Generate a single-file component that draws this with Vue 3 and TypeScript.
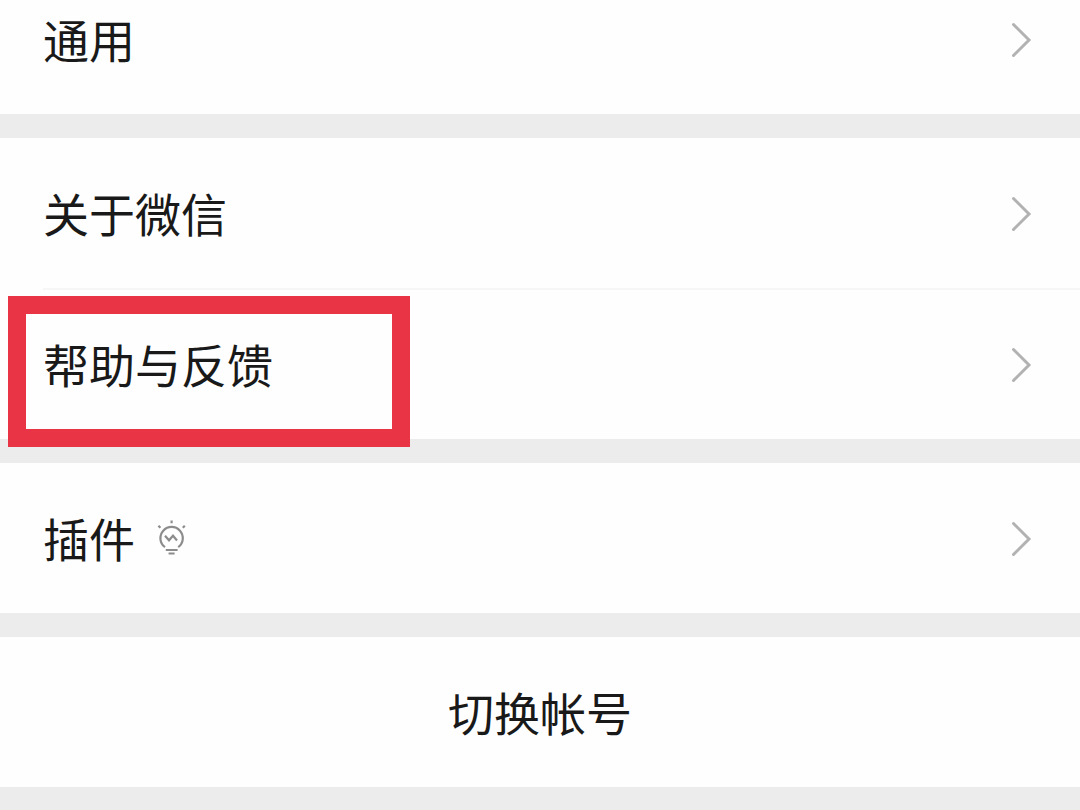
<script setup lang="ts">
interface Item {
  label: string
  hint?: boolean
  marked?: boolean
}

const groups: Item[][] = [
  [{ label: '通用' }],
  [{ label: '关于微信' }, { label: '帮助与反馈', marked: true }],
  [{ label: '插件', hint: true }],
]
</script>

<template>
  <main class="settings">
    <section v-for="(group, index) in groups" :key="index" class="group">
      <button v-for="item in group" :key="item.label" type="button" class="row">
        <span class="label">{{ item.label }}</span>
        <svg v-if="item.hint" class="bulb" viewBox="0 0 32 38" aria-hidden="true">
          <path d="M10 27.2A11.2 11.2 0 1 1 23.2 27.2" />
          <path d="M10 15.7l4 4.6 4-4.6 4 4.8" />
          <path d="M10.8 30h11.8M13.6 33.5h6M16.6 0.5v2.8M3.4 5.7l2 2M29.8 5.7l-2 2" />
        </svg>
        <svg class="chevron" viewBox="0 0 22 36" aria-hidden="true">
          <path d="M3.5 2.5L19 18L3.5 33.5" />
        </svg>
        <span v-if="item.marked" class="marker"></span>
      </button>
    </section>
    <section class="group">
      <button type="button" class="row centered">
        <span class="label">切换帐号</span>
      </button>
    </section>
  </main>
</template>

<style>
html,
body {
  background: #ececec;
}

body {
  margin: 0;
  overflow: hidden;
}
</style>

<style scoped>
.settings {
  display: flex;
  flex-direction: column;
  gap: 24px;
  margin-top: -36px;
  padding-bottom: 24px;
  font-family: "Noto Sans CJK SC", sans-serif;
}

.group {
  background: #fefefe;
}

.row {
  position: relative;
  display: flex;
  align-items: center;
  width: 100%;
  height: 150px;
  margin: 0;
  padding: 2px 48px 0 43px;
  border: 0;
  background: none;
  color: #191919;
  font-family: inherit;
  font-size: 46px;
  line-height: 68px;
  text-align: left;
  cursor: pointer;
}

.row + .row {
  height: 151px;
}

.row + .row::before {
  content: "";
  position: absolute;
  top: 0;
  left: 43px;
  right: 0;
  height: 2px;
  background: #f6f6f6;
}

.label {
  padding-bottom: 4px;
}

.centered {
  justify-content: center;
  padding: 2px 43px 0;
}

.bulb {
  width: 32px;
  height: 38px;
  margin-left: 20px;
  fill: none;
  stroke: #8c8c8c;
  stroke-width: 2.2;
}

.chevron {
  width: 22px;
  height: 36px;
  margin-left: auto;
  fill: none;
  stroke: #b2b2b2;
  stroke-width: 3;
  stroke-linecap: round;
}

.marker {
  position: absolute;
  z-index: 1;
  top: 8px;
  left: 8px;
  box-sizing: border-box;
  width: 402px;
  height: 151px;
  border: 18px solid #e83445;
  pointer-events: none;
}
</style>
